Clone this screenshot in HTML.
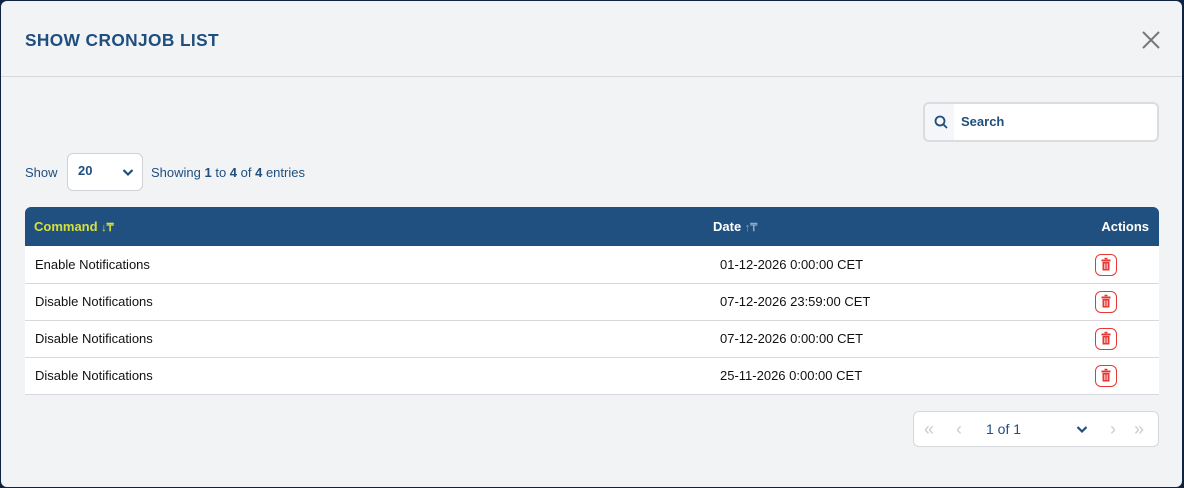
<!DOCTYPE html>
<html><head><style>
*{box-sizing:border-box;margin:0;padding:0}
body{width:1184px;height:488px;background:#0f2340;font-family:"Liberation Sans",sans-serif;position:relative;overflow:hidden}
.modal{position:absolute;left:1px;top:1px;width:1181px;height:486px;background:#f2f3f5;border-radius:6px}
.title{position:absolute;left:24px;top:29px;font-size:17.3px;font-weight:bold;color:#1f4e7f;letter-spacing:0.4px}
.close{position:absolute;left:1140px;top:29px}
.hr{position:absolute;left:0;top:75px;width:100%;height:1px;background:#d6d8dc}
.search{position:absolute;left:922px;top:101px;width:236px;height:40px;border:2px solid #dadcdf;border-radius:6px;background:#fff;overflow:hidden}
.search .ic{position:absolute;left:0;top:0;width:29px;height:100%;background:#f4f6f9}
.search span{position:absolute;left:36px;top:10px;font-size:13px;font-weight:bold;color:#1f4e7f}
.show{position:absolute;left:24px;top:164px;font-size:13px;color:#1f4e7f}
.sel{position:absolute;left:66px;top:152px;width:76px;height:38px;border:1px solid #cfd2d6;border-radius:6px;background:#fff}
.sel span{position:absolute;left:10px;top:9px;font-size:13px;font-weight:bold;color:#1f4e7f}
.info{position:absolute;left:150px;top:164px;font-size:13px;color:#1f4e7f}
table{position:absolute;left:25px;top:207px;width:1134px;border-collapse:collapse;font-size:13px}
th{background:#1f5080;height:39px;text-align:left;font-weight:bold;color:#fff}
th:first-child{border-top-left-radius:6px;color:#d6e03a;padding-left:9px}
th:nth-child(2){padding-left:9px}
th:last-child{border-top-right-radius:6px;text-align:right;padding-right:10px}
td{background:#fff;height:37px;border-bottom:1px solid #d6d8dc;color:#111}
td:first-child{padding-left:10px}
td:nth-child(2){padding-left:16px}
.pg{position:absolute;left:913px;top:411px;width:246px;height:36px;border:1px solid #d6d8dc;border-radius:6px;background:#fff}
.pg span{position:absolute;font-size:14px}
.trash{position:absolute;width:22px;height:22px;border:1px solid #e53935;border-radius:6px;background:#fff}
</style></head><body>
<div class="modal">
<div class="title">SHOW CRONJOB LIST</div>
<svg class="close" width="20" height="20" viewBox="0 0 20 20"><path d="M2 2L18 18M18 2L2 18" stroke="#777" stroke-width="2"/></svg>
<div class="hr"></div>
<div class="search"><div class="ic"><svg style="position:absolute;left:9px;top:11px" width="15" height="15" viewBox="0 0 15 15"><circle cx="6" cy="6" r="4.5" stroke="#1f4e7f" stroke-width="1.8" fill="none"/><path d="M9.5 9.5L13 13" stroke="#1f4e7f" stroke-width="1.8"/></svg></div><span>Search</span></div>
<div class="show">Show</div>
<div class="sel"><span>20</span><svg style="position:absolute;left:54px;top:14px" width="12" height="9" viewBox="0 0 12 9"><path d="M1.5 2L6 6.5L10.5 2" stroke="#1f4e7f" stroke-width="2.2" fill="none"/></svg></div>
<div class="info">Showing <b>1</b> to <b>4</b> of <b>4</b> entries</div>
</div>
<table>
<tr><th style="width:679px">Command <span style="font-size:11px">↓₸</span></th><th>Date <span style="font-size:11px;color:#8fa8c4">↑₸</span></th><th>Actions</th></tr>
<tr><td>Enable Notifications</td><td>01-12-2026 0:00:00 CET</td><td></td></tr>
<tr><td>Disable Notifications</td><td>07-12-2026 23:59:00 CET</td><td></td></tr>
<tr><td>Disable Notifications</td><td>07-12-2026 0:00:00 CET</td><td></td></tr>
<tr><td>Disable Notifications</td><td>25-11-2026 0:00:00 CET</td><td></td></tr>
</table>
<div class="pg">
<span style="left:10px;top:7px;color:#ccc;font-size:18px">«</span>
<span style="left:42px;top:7px;color:#ccc;font-size:18px">‹</span>
<span style="left:72px;top:9px;color:#1f4e7f">1 of 1</span>
<svg style="position:absolute;left:162px;top:13px" width="12" height="9" viewBox="0 0 12 9"><path d="M1.5 2L6 6.5L10.5 2" stroke="#1f4e7f" stroke-width="2.2" fill="none"/></svg>
<span style="left:196px;top:7px;color:#ccc;font-size:18px">›</span>
<span style="left:220px;top:7px;color:#ccc;font-size:18px">»</span>
</div>
<div class="trash" style="left:1095px;top:254px"><svg width="20" height="20" viewBox="0 0 20 20"><path d="M5.5 5.5h9" stroke="#e53935" stroke-width="2"/><path d="M8.5 3.5h3" stroke="#e53935" stroke-width="1.5"/><path d="M6.5 7h7v8.5h-7z" fill="#e53935"/><path d="M8.5 8.5v5.5M10 8.5v5.5M11.5 8.5v5.5" stroke="#fff" stroke-width="0.6"/></svg></div>
<div class="trash" style="left:1095px;top:291px"><svg width="20" height="20" viewBox="0 0 20 20"><path d="M5.5 5.5h9" stroke="#e53935" stroke-width="2"/><path d="M8.5 3.5h3" stroke="#e53935" stroke-width="1.5"/><path d="M6.5 7h7v8.5h-7z" fill="#e53935"/><path d="M8.5 8.5v5.5M10 8.5v5.5M11.5 8.5v5.5" stroke="#fff" stroke-width="0.6"/></svg></div>
<div class="trash" style="left:1095px;top:328px"><svg width="20" height="20" viewBox="0 0 20 20"><path d="M5.5 5.5h9" stroke="#e53935" stroke-width="2"/><path d="M8.5 3.5h3" stroke="#e53935" stroke-width="1.5"/><path d="M6.5 7h7v8.5h-7z" fill="#e53935"/><path d="M8.5 8.5v5.5M10 8.5v5.5M11.5 8.5v5.5" stroke="#fff" stroke-width="0.6"/></svg></div>
<div class="trash" style="left:1095px;top:365px"><svg width="20" height="20" viewBox="0 0 20 20"><path d="M5.5 5.5h9" stroke="#e53935" stroke-width="2"/><path d="M8.5 3.5h3" stroke="#e53935" stroke-width="1.5"/><path d="M6.5 7h7v8.5h-7z" fill="#e53935"/><path d="M8.5 8.5v5.5M10 8.5v5.5M11.5 8.5v5.5" stroke="#fff" stroke-width="0.6"/></svg></div>
</body></html>
